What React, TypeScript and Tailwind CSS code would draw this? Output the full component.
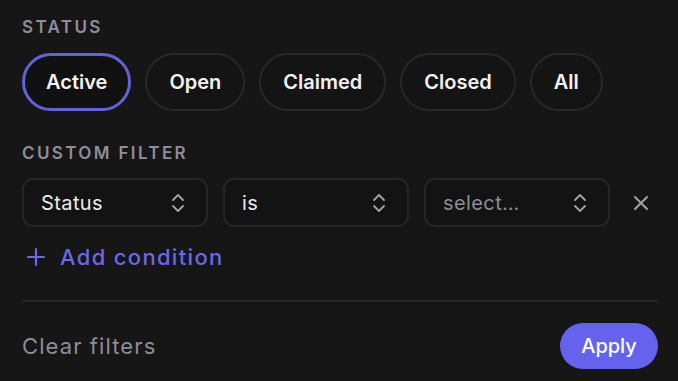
import React from "react";

const ChevUD = () => (
  <svg width="16" height="22" viewBox="0 0 16 22" fill="none" stroke="#a3a1ad" strokeWidth="1.8" strokeLinecap="round" strokeLinejoin="round">
    <path d="M3 8 L8 3 L13 8" />
    <path d="M3 14 L8 19 L13 14" />
  </svg>
);

const Select = ({ label, placeholder }: { label: string; placeholder?: boolean }) => (
  <div className="flex h-[49px] w-[186px] items-center justify-between rounded-[11px] border-2 border-[#262626] bg-[#131313] pl-[17px] pr-[20px]">
    <span className={placeholder ? "text-[20px] tracking-[0.02em] text-[#8e8c98]" : "text-[20px] tracking-[0.02em] text-[#ececec]"}>{label}</span>
    <ChevUD />
  </div>
);

export default function App() {
  const chips = ["Active", "Open", "Claimed", "Closed", "All"];
  return (
    <div
      className="h-[381px] w-[678px] bg-[#161616] pl-[22px] pr-[20px] pt-[17px]"
      style={{ fontFamily: "Inter, 'Noto Sans', sans-serif" }}
    >
      <div className="h-[20px] text-[17px] font-semibold leading-[20px] tracking-[0.14em] text-[#8f8d9c]">STATUS</div>
      <div className="mt-[16px] flex gap-[14px]">
        {chips.map((c, i) => (
          <div
            key={c}
            className={
              i === 0
                ? "flex h-[58px] items-center rounded-full border-[3px] border-[#6262db] bg-[#111111] px-[21px] text-[20px] font-semibold text-[#f2f2f2]"
                : "flex h-[58px] items-center rounded-full border-2 border-[#282828] bg-[#141414] px-[22px] text-[20px] font-semibold text-[#f2f2f2]"
            }
          >
            {c}
          </div>
        ))}
      </div>
      <div className="mt-[32px] h-[20px] text-[17px] font-semibold leading-[20px] tracking-[0.14em] text-[#8f8d9c]">CUSTOM FILTER</div>
      <div className="mt-[15px] flex items-center gap-[15px]">
        <Select label="Status" />
        <Select label="is" />
        <Select label="select…" placeholder />
        <svg className="ml-[6px]" width="20" height="20" viewBox="0 0 20 20" fill="none" stroke="#a3a1ad" strokeWidth="2" strokeLinecap="round">
          <path d="M4 4 L16 16 M16 4 L4 16" />
        </svg>
      </div>
      <div className="mt-[18px] flex h-[24px] items-center gap-[14px] pl-[4px]">
        <svg width="20" height="20" viewBox="0 0 20 20" fill="none" stroke="#6a68e6" strokeWidth="2.2" strokeLinecap="round">
          <path d="M10 2 V18 M2 10 H18" />
        </svg>
        <span className="text-[22px] font-medium tracking-[0.06em] text-[#6a68e6]">Add condition</span>
      </div>
      <div className="mt-[31px] h-[2px] bg-[#262626]" />
      <div className="mt-[21px] flex items-center justify-between">
        <span className="text-[22px] tracking-[0.05em] text-[#8e8c98]">Clear filters</span>
        <div className="flex h-[46px] w-[98px] items-center justify-center rounded-full bg-[#6563ee] text-[20px] font-medium text-white">
          Apply
        </div>
      </div>
    </div>
  );
}
